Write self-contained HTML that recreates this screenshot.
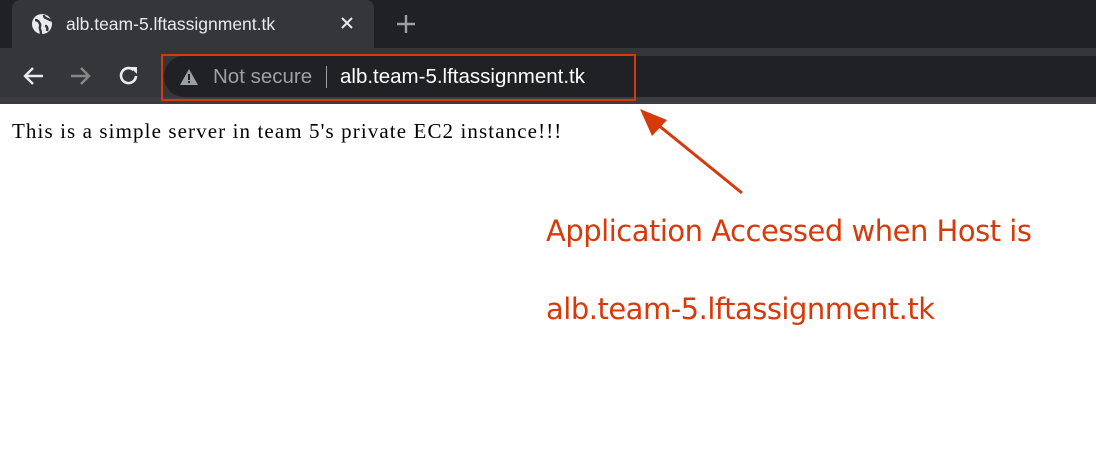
<!DOCTYPE html>
<html><head><style>
*{margin:0;padding:0;box-sizing:border-box}
body{width:1096px;height:463px;background:#fff;position:relative;overflow:hidden;font-family:"Liberation Sans",sans-serif}
.top{position:absolute;left:0;top:0;width:1096px;height:48px;background:#202124}
.tab{position:absolute;left:12px;top:0;width:362px;height:48px;background:#35363a;border-radius:8px 8px 0 0}
.bar{position:absolute;left:0;top:48px;width:1096px;height:56px;background:#35363a}
.omni{position:absolute;left:164px;top:56px;width:940px;height:41px;background:#202124;border-radius:20px 0 0 20px}
.t{position:absolute;white-space:nowrap}
</style></head><body>
<div class="top"></div>
<div class="tab"></div>
<svg class="t" style="left:31px;top:13px" width="22" height="22" viewBox="0 0 22 22"><circle cx="11" cy="11" r="10" fill="#e8eaed"/><path d="M4 7c3 0 4 2 5 4s-1 3 0 5 1 4 1 5M13 2c0 3 2 3 4 4s3 2 4 1M14 13c2 0 3 2 2 5" stroke="#35363a" stroke-width="2.4" fill="none"/></svg>
<div class="t" style="left:66px;top:14px;font-size:17.5px;color:#e8eaed">alb.team-5.lftassignment.tk</div>
<svg class="t" style="left:340px;top:16px" width="14" height="14"><path d="M2 2L12 12M12 2L2 12" stroke="#e8eaed" stroke-width="2"/></svg>
<svg class="t" style="left:396px;top:14px" width="20" height="20"><path d="M10 1V19M1 10H19" stroke="#9aa0a6" stroke-width="2.4"/></svg>
<div class="bar"></div>
<div class="omni"></div>
<div style="position:absolute;left:0;top:97px;width:1096px;height:7px;background:#3c3d41"></div>
<svg class="t" style="left:22px;top:66px" width="22" height="20"><path d="M21 10H3M11 2L3 10L11 18" stroke="#e8eaed" stroke-width="2.4" fill="none"/></svg>
<svg class="t" style="left:70px;top:66px" width="22" height="20"><path d="M1 10H19M11 2L19 10L11 18" stroke="#888" stroke-width="2.4" fill="none"/></svg>
<svg class="t" style="left:118px;top:65px" width="22" height="22" viewBox="0 0 22 22"><path d="M18 11A7.5 7.5 0 1 1 15.5 5" stroke="#e8eaed" stroke-width="2.6" fill="none"/><path d="M12 2H19V9Z" fill="#e8eaed"/></svg>
<svg class="t" style="left:179px;top:68px" width="20" height="18" viewBox="0 0 20 18"><path d="M10 1L19 17H1Z" fill="#9aa0a6"/><rect x="9" y="6" width="2" height="6" fill="#202124"/><rect x="9" y="13" width="2" height="2" fill="#202124"/></svg>
<div class="t" style="left:213px;top:65px;font-size:20.5px;color:#9aa0a6">Not secure</div>
<div style="position:absolute;left:326px;top:66px;width:1px;height:22px;background:#9aa0a6"></div>
<div class="t" style="left:340px;top:65px;font-size:20.5px;color:#fff">alb.team-5.lftassignment.tk</div>
<div style="position:absolute;left:161px;top:54px;width:475px;height:47px;border:2.5px solid #d63a0a"></div>
<div class="t" style="left:12px;top:119px;font-family:'Liberation Serif',serif;font-size:21px;letter-spacing:1.1px;color:#000">This is a simple server in team 5's private EC2 instance!!!</div>
<svg class="t" style="left:630px;top:100px" width="130" height="100"><line x1="112" y1="93" x2="22" y2="20" stroke="#d63a0a" stroke-width="3"/><path d="M10 9L37 20L22 36Z" fill="#d63a0a"/></svg>
<div class="t" style="left:546px;top:214px;font-size:29px;color:#d63a0a;font-family:'DejaVu Sans',sans-serif;letter-spacing:-0.5px">Application Accessed when Host is</div>
<div class="t" style="left:546px;top:292px;font-size:29px;color:#d63a0a;font-family:'DejaVu Sans',sans-serif;letter-spacing:-0.5px">alb.team-5.lftassignment.tk</div>
</body></html>
